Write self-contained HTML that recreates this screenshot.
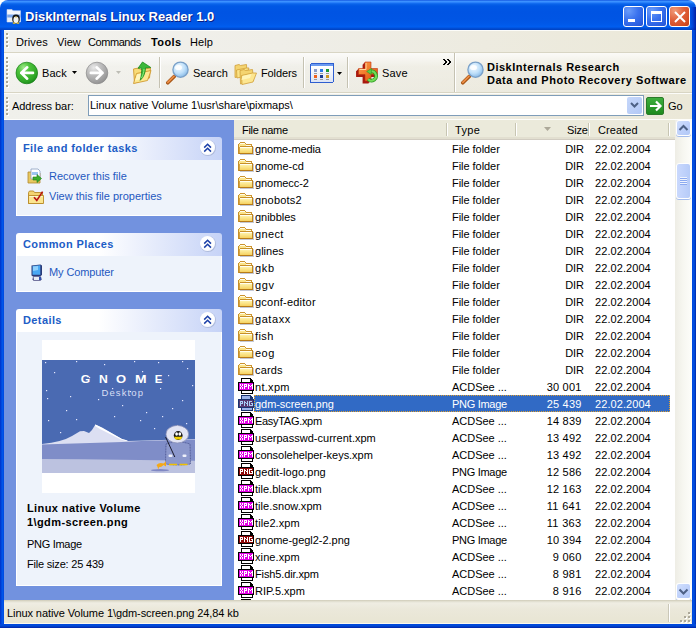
<!DOCTYPE html>
<html><head><meta charset="utf-8">
<style>
*{margin:0;padding:0;box-sizing:border-box}
html,body{width:696px;height:628px;overflow:hidden;background:#fff}
body{position:relative;font-family:"Liberation Sans",sans-serif;font-size:11px;color:#000}
.a{position:absolute}
.t{position:absolute;white-space:nowrap;line-height:13px}
#title{left:0;top:0;width:696px;height:30px;border-radius:8px 8px 0 0;
background:linear-gradient(to bottom,#0843d8 0px,#3c95ff 1px,#3a8eff 2px,#1a74f5 3px,#0a64ea 4px,#0058e5 6px,#0054e3 12px,#0055e4 19px,#0059e9 24px,#005ef0 27px,#0050da 28px,#0041c0 30px)}
#frameL{left:0;top:30px;width:4px;height:598px;background:linear-gradient(to right,#0030c8,#0052e6 2px,#0058ee 3px,#0040d8 4px)}
#frameR{left:692px;top:30px;width:4px;height:598px;background:linear-gradient(to right,#0040d8,#0052e6 1px,#0044d0 3px,#001ea0 4px)}
#frameB{left:0;top:624px;width:696px;height:4px;background:linear-gradient(to bottom,#0040d8,#0050e0 1px,#0038c0 3px,#0020a0 4px)}
.bar{background:#eef0eb}
.grip{position:absolute;width:3px;background:repeating-linear-gradient(to bottom,#a8a594 0 2px,transparent 2px 4px) 0 0/2px 100% no-repeat,repeating-linear-gradient(to bottom,transparent 0 1px,#fff 1px 3px,transparent 3px 4px) 1px 0/2px 100% no-repeat}
.sep{position:absolute;width:2px;background:linear-gradient(to right,#c5c2b2 1px,#fff 1px)}
.box{position:absolute;left:16px;width:206px}
.bh{position:absolute;left:0;top:0;width:206px;height:23px;border-radius:3px 3px 0 0;background:linear-gradient(to right,#fff 0%,#fff 40%,#c6d3f7 100%)}
.bh .t{color:#215dc6;font-weight:bold;left:7px;top:5px;letter-spacing:0.4px}
.bb{position:absolute;left:0;top:23px;width:206px;background:#eef3fb;border:1px solid #fff;border-top:0}
.chev{position:absolute;left:184px;top:3px;width:15px;height:15px;border-radius:50%;background:radial-gradient(circle at 45% 40%,#fff 55%,#f4f6fc 75%,#b8c2e0 100%);box-shadow:0.5px 0.5px 0 0.5px #b0bcdc}
.lnk{color:#1f58c0}
.row{position:absolute;left:234px;width:441px;height:17px}
.row .t{top:2px}
</style></head><body>
<div id="title" class="a"></div>
<div class="a" style="left:690px;top:7px;width:6px;height:23px;background:linear-gradient(to right,rgba(0,40,200,0),rgba(0,40,190,.5) 3px,rgba(0,20,150,.85) 6px)"></div>
<div id="frameL" class="a"></div>
<div id="frameR" class="a"></div>
<div id="frameB" class="a"></div>

<!-- title icon -->
<svg class="a" style="left:6px;top:8px" width="16" height="16" viewBox="0 0 16 16">
<path d="M1 1.5h5l1 1.2h7.5V14H1z" fill="#f4f6fc" stroke="#c8d4ec" stroke-width=".6"/>
<path d="M1.2 6.5h13.3V14H1.2z" fill="#7aa4e8"/>
<path d="M1.2 9.5h13.3V14H1.2z" fill="#e8eef8"/>
<ellipse cx="10" cy="11" rx="3.8" ry="4.4" fill="#141414"/>
<ellipse cx="10" cy="11.8" rx="2.6" ry="3.4" fill="#f2f2f2"/>
<path d="M9 8.8h2l-1 1.2z" fill="#f4c41a"/>
<path d="M6.8 14.6h2.6v1.2H6.8zM10.6 14.6h2.6v1.2h-2.6z" fill="#f4c41a"/>
</svg>
<div class="t" style="left:25px;top:9px;font-size:13px;font-weight:bold;color:#fff;text-shadow:1px 1px 0 #0a1e82;line-height:15px">DiskInternals Linux Reader 1.0</div>
<!-- caption buttons -->
<div class="a" style="left:623px;top:6px;width:21px;height:21px;border:1px solid #fff;border-radius:3px;background:radial-gradient(circle at 25% 20%,#6a9cfa,#3a72ee 45%,#2a5ee0 80%,#2250d0)"></div>
<div class="a" style="left:628px;top:19px;width:7px;height:3px;background:#fff"></div>
<div class="a" style="left:646px;top:6px;width:21px;height:21px;border:1px solid #fff;border-radius:3px;background:radial-gradient(circle at 25% 20%,#6a9cfa,#3a72ee 45%,#2a5ee0 80%,#2250d0)"></div>
<div class="a" style="left:651px;top:11px;width:11px;height:11px;border:1px solid #fff;border-top-width:3px"></div>
<div class="a" style="left:669px;top:6px;width:21px;height:21px;border:1px solid #fff;border-radius:3px;background:radial-gradient(circle at 25% 20%,#f09a78,#e0603a 45%,#d44c22 80%,#c03c14)"></div>
<svg class="a" style="left:669px;top:6px" width="21" height="21"><path d="M6 6L16 16M16 6L6 16" stroke="#fff" stroke-width="2"/></svg>

<div class="a bar" style="left:4px;top:30px;width:688px;height:22px;background:linear-gradient(to right,#f2f2ee 0%,#efeee8 40%,#ebe8d8 100%);border-top:1px solid #fcfcf9"></div>
<div class="a" style="left:4px;top:52px;width:688px;height:1px;background:#d8d5c4"></div>
<div class="grip" style="left:6px;top:33px;height:15px"></div>
<div class="t" style="left:16px;top:36px;letter-spacing:0.105px">Drives</div>
<div class="t" style="left:57px;top:36px;letter-spacing:0.036px">View</div>
<div class="t" style="left:88px;top:36px;letter-spacing:-0.431px">Commands</div>
<div class="t" style="left:151px;top:36px;font-weight:bold;letter-spacing:0.4px">Tools</div>
<div class="t" style="left:190px;top:36px;letter-spacing:0.044px">Help</div>

<div class="a" style="left:4px;top:53px;width:688px;height:39px;background:linear-gradient(to bottom,rgba(255,255,255,.8),rgba(255,255,255,.15) 35%,rgba(255,255,255,0) 100%),linear-gradient(to right,#f1f1ec 0%,#eeede6 40%,#ebe8d8 100%)"></div>
<div class="a" style="left:4px;top:92px;width:688px;height:1px;background:#d8d5c4"></div>
<div class="grip" style="left:6px;top:57px;height:31px"></div>
<div class="grip" style="left:459px;top:57px;height:31px;display:none"></div>
<div class="sep" style="left:454px;top:53px;height:39px"></div>
<!-- back -->
<svg class="a" style="left:15px;top:61px" width="24" height="24" viewBox="0 0 24 24">
<defs><radialGradient id="gb" cx="35%" cy="25%" r="80%"><stop offset="0" stop-color="#9ee88a"/><stop offset=".35" stop-color="#4cc23a"/><stop offset=".8" stop-color="#2ea626"/><stop offset="1" stop-color="#1a8a1a"/></radialGradient>
<radialGradient id="lens" cx="40%" cy="35%" r="65%"><stop offset="0" stop-color="#f4fbff"/><stop offset=".6" stop-color="#bfe0fa"/><stop offset="1" stop-color="#8cbce8"/></radialGradient>
<radialGradient id="gg" cx="35%" cy="25%" r="80%"><stop offset="0" stop-color="#e8e8e8"/><stop offset=".4" stop-color="#c0c0c0"/><stop offset="1" stop-color="#909090"/></radialGradient></defs>
<circle cx="11.8" cy="12" r="10.8" fill="url(#gb)" stroke="#1a8018" stroke-width=".7"/>
<path d="M18 11.9H6.2M12.2 6.3L6.2 11.9l6 5.8" stroke="#fff" stroke-width="2.6" fill="none" stroke-linecap="round" stroke-linejoin="round"/>
</svg>
<div class="t" style="left:42px;top:67px;letter-spacing:0.083px">Back</div>
<svg class="a" style="left:72px;top:71px" width="6" height="4"><path d="M0 0h5L2.5 3z" fill="#000"/></svg>
<svg class="a" style="left:85px;top:61px" width="24" height="24" viewBox="0 0 24 24">
<circle cx="12" cy="12" r="10.8" fill="url(#gg)" stroke="#8a8a8a" stroke-width=".7"/>
<path d="M5.8 11.9H17.6M11.6 6.3l6 5.6-6 5.8" stroke="#fff" stroke-width="2.6" fill="none" stroke-linecap="round" stroke-linejoin="round"/>
</svg>
<svg class="a" style="left:116px;top:71px" width="6" height="4"><path d="M0 0h5L2.5 3z" fill="#bdbdb5"/></svg>
<!-- up -->
<svg class="a" style="left:130px;top:61px" width="24" height="24" viewBox="0 0 24 24">
<path d="M3.5 8l5-1 2 1.5 10-1.5-1 10-15 5z" fill="#f8dc78" stroke="#d09a30" stroke-width=".9"/>
<path d="M6.5 12.5l14.5-3-3.5 10-14 3z" fill="#fde890" stroke="#d09a30" stroke-width=".9"/>
<path d="M7 13.5l6-1.3-2 6-6 1.3z" fill="#fff6c0"/>
<path d="M12.5 1L8 7.3l3.6-.2c.3 3-.2 8-1.4 12.2 3.6-3 5.2-8 5.3-12.4l5.3-.4z" fill="#3cb83a" stroke="#1c8a1c" stroke-width=".8" stroke-linejoin="round"/>
<path d="M14 8c0 3-1 6-2.5 9" stroke="#8ef07a" stroke-width="1" fill="none"/>
</svg>
<div class="sep" style="left:159px;top:57px;height:31px"></div>
<!-- search -->
<svg class="a" style="left:165px;top:61px" width="24" height="24" viewBox="0 0 24 24">
<path d="M2.8 21.8l6.4-6.4" stroke="#a85818" stroke-width="3.6" stroke-linecap="round"/>
<path d="M2.8 21.4l6.2-6.2" stroke="#f09048" stroke-width="1.6" stroke-linecap="round"/>
<circle cx="15.5" cy="8.7" r="7.6" fill="url(#lens)" stroke="#7aa0c8" stroke-width="1.3"/>
<ellipse cx="13.5" cy="6.5" rx="3.5" ry="2.6" fill="#fff" opacity=".85"/>
</svg>
<div class="t" style="left:193px;top:67px;letter-spacing:-0.010px">Search</div>
<!-- folders -->
<svg class="a" style="left:234px;top:61px" width="24" height="24" viewBox="0 0 24 24">
<path d="M1 4.5l4-1 1.5 1 6-1 .5 10-12 3z" fill="#f4d470" stroke="#d0a038" stroke-width=".8"/>
<path d="M2.5 9l10-2 2.5 0-3 8-9 2z" fill="#fbe488" stroke="#d0a038" stroke-width=".8"/>
<path d="M6 9.5l4-1 1.5 1 7-1 1 11-13 3.5z" fill="#f4d470" stroke="#d0a038" stroke-width=".8"/>
<path d="M7.5 14.5l11-2.5 4 0-3.5 9-11 2.5z" fill="#fde690" stroke="#d0a038" stroke-width=".8"/>
<path d="M8.5 15l9-2-1.5 4-8.5 2z" fill="#fff4b8"/>
</svg>
<div class="t" style="left:261px;top:67px;letter-spacing:-0.127px">Folders</div>
<div class="sep" style="left:303px;top:57px;height:31px"></div>
<!-- views -->
<svg class="a" style="left:310px;top:63px" width="24" height="21" viewBox="0 0 24 21" shape-rendering="crispEdges">
<defs><linearGradient id="vw" x1="0" y1="0" x2="0" y2="1"><stop offset="0" stop-color="#ffffff"/><stop offset="1" stop-color="#dce4f4"/></linearGradient></defs>
<rect x="0" y="0" width="24" height="20" rx="2" fill="#2e5ed0"/>
<rect x="1" y="1" width="22" height="2" fill="#6a9af0"/>
<rect x="1" y="3" width="22" height="16" fill="url(#vw)"/>
<rect x="4" y="6" width="3" height="3" fill="#8a9cc8"/><rect x="10" y="6" width="3" height="3" fill="#2a7ae8"/><rect x="16" y="6" width="3" height="3" fill="#1a9a30"/>
<rect x="4" y="10" width="3" height="1" fill="#9a9a9a"/><rect x="10" y="10" width="3" height="1" fill="#9a9a9a"/><rect x="16" y="10" width="3" height="1" fill="#9a9a9a"/>
<rect x="4" y="12" width="3" height="3" fill="#f0601a"/><rect x="10" y="12" width="3" height="3" fill="#1a3a90"/><rect x="16" y="12" width="3" height="3" fill="#d09a20"/>
<rect x="4" y="16" width="3" height="1" fill="#9a9a9a"/><rect x="10" y="16" width="3" height="1" fill="#9a9a9a"/><rect x="16" y="16" width="3" height="1" fill="#9a9a9a"/>
</svg>
<svg class="a" style="left:337px;top:72px" width="6" height="4"><path d="M0 0h5L2.5 3z" fill="#000"/></svg>
<div class="sep" style="left:347px;top:57px;height:31px"></div>
<!-- save -->
<svg class="a" style="left:354px;top:61px" width="25" height="24" viewBox="0 0 25 24">
<defs><linearGradient id="cr" x1="0" y1="0" x2="1" y2="1"><stop offset="0" stop-color="#ffa050"/><stop offset=".5" stop-color="#f07828"/><stop offset="1" stop-color="#d84810"/></linearGradient></defs>
<g transform="translate(1.5 0)"><path d="M9.5 1h6v6.5h6.5v6h-6.5v6.5h-6v-6.5H3v-6h6.5z" fill="#a81a0e" transform="translate(-0.6 0.6)"/><path d="M9.5 1h6v6.5h6.5v6h-6.5v6.5h-6v-6.5H3v-6h6.5z" fill="#a81a0e" transform="translate(-1.2 1.2)"/><path d="M9.5 1h6v6.5h6.5v6h-6.5v6.5h-6v-6.5H3v-6h6.5z" fill="#a81a0e" transform="translate(-1.8 1.8)"/><path d="M9.5 1h6v6.5h6.5v6h-6.5v6.5h-6v-6.5H3v-6h6.5z" fill="#a81a0e" transform="translate(-2.4 2.4)"/>
<path d="M9.5 1h6v6.5h6.5v6h-6.5v6.5h-6v-6.5H3v-6h6.5z" fill="url(#cr)" stroke="#c03010" stroke-width=".6"/>
<path d="M10.5 2v6.5H4" stroke="#ffd8a0" stroke-width="1" fill="none"/></g>
<path d="M14.2 18.2a4.6 4.6 0 1 0 1.8-7.6" stroke="#2a9a20" stroke-width="3.6" fill="none"/>
<path d="M14.2 18.2a4.6 4.6 0 1 0 1.8-7.6" stroke="#74dc58" stroke-width="2" fill="none"/>
<path d="M17.5 7.5l-4.8 3 4.5 3z" fill="#5ccc44" stroke="#2a9a20" stroke-width=".6"/>
</svg>
<div class="t" style="left:382px;top:67px;letter-spacing:0.180px">Save</div>
<svg class="a" style="left:443px;top:59px" width="9" height="6" shape-rendering="crispEdges"><path d="M0 0h2v1h1v1h1v2h-1v1h-1v1H0V5h1V4h1V2H1V1H0zM4 0h2v1h1v1h1v2h-1v1h-1v1H4V5h1V4h1V2H5V1H4z" fill="#000"/></svg>
<!-- diskinternals -->
<svg class="a" style="left:460px;top:61px" width="24" height="24" viewBox="0 0 24 24">
<path d="M2.8 21.8l6.4-6.4" stroke="#a85818" stroke-width="3.6" stroke-linecap="round"/>
<path d="M2.8 21.4l6.2-6.2" stroke="#f09048" stroke-width="1.6" stroke-linecap="round"/>
<circle cx="15.5" cy="8.7" r="7.6" fill="url(#lens)" stroke="#7aa0c8" stroke-width="1.3"/>
<ellipse cx="13.5" cy="6.5" rx="3.5" ry="2.6" fill="#fff" opacity=".85"/>
</svg>
<div class="t" style="left:487px;top:61px;font-weight:bold;letter-spacing:0.5px">DiskInternals Research</div>
<div class="t" style="left:487px;top:74px;font-weight:bold;letter-spacing:0.53px">Data and Photo Recovery Software</div>

<div class="a" style="left:4px;top:93px;width:688px;height:27px;background:linear-gradient(to right,#f0f0eb 0%,#eeede6 40%,#ebe8d8 100%);border-top:1px solid #fcfcf9;border-bottom:1px solid #fdfdfa"></div>
<div class="grip" style="left:6px;top:97px;height:19px"></div>
<div class="t" style="left:12px;top:100px;letter-spacing:-0.048px">Address bar:</div>
<div class="a" style="left:88px;top:95px;width:556px;height:21px;background:#fff;border:1px solid #7f9db9"></div>
<div class="t" style="left:90px;top:99px;letter-spacing:-0.020px">Linux native Volume 1\usr\share\pixmaps\</div>
<div class="a" style="left:627px;top:97px;width:15px;height:17px;border-radius:2px;background:linear-gradient(135deg,#c6d7fa,#b2c8f6)"></div>
<svg class="a" style="left:630px;top:102px" width="9" height="7"><path d="M1 1l3.5 3.5L8 1" stroke="#4d6185" stroke-width="2" fill="none"/></svg>
<div class="a" style="left:646px;top:97px;width:18px;height:18px;border-radius:2px;background:linear-gradient(to bottom,#3dae3d,#1e8a1e);border:1px solid #2a7a2a"></div>
<svg class="a" style="left:646px;top:97px" width="19" height="18"><path d="M4 9h10M10 4.5l4.5 4.5L10 13.5" stroke="#fff" stroke-width="2.2" fill="none"/></svg>
<div class="t" style="left:668px;top:100px;letter-spacing:0.056px">Go</div>

<div class="a" style="left:4px;top:120px;width:230px;height:480px;background:#7292df"></div>
<div class="box" style="top:137px;height:79px">
 <div class="bh"><div class="t">File and folder tasks</div><div class="chev"></div>
 <svg class="a" style="left:184px;top:3px" width="15" height="15"><path d="M4.2 7.6L7.6 4.2L11 7.6M4.2 11.6L7.6 8.2L11 11.6" stroke="#1c40a8" stroke-width="1.5" fill="none"/></svg></div>
 <div class="bb" style="height:56px"></div>
 <svg class="a" style="left:11px;top:31px" width="16" height="16" viewBox="0 0 16 16">
  <path d="M1 4h5l1 1h6v10H1z" fill="#e8c860" stroke="#b08830" stroke-width=".8"/>
  <path d="M4 1h7l2 2v8H4z" fill="#fff" stroke="#8aa0c0" stroke-width=".8"/>
  <path d="M5 4h6v3H5z" fill="#9cc4f0"/>
  <path d="M6 9h4V6.5l4.5 4L10 14.5V12H6z" fill="#3cae2c" stroke="#1e7a18" stroke-width=".6"/>
 </svg>
 <div class="t lnk" style="left:33px;top:33px;letter-spacing:-0.027px">Recover this file</div>
 <svg class="a" style="left:12px;top:53px" width="16" height="14" viewBox="0 0 16 14">
  <path d="M.5 2.5l1-1.5h4l1 1.5h8v11H.5z" fill="#f4d470" stroke="#b88a28" stroke-width=".9"/>
  <path d="M.5 5.5h15v8H.5z" fill="#fbe590" stroke="#b88a28" stroke-width=".9"/>
  <path d="M1.5 6.5h13" stroke="#fff8d0" stroke-width="1"/>
  <path d="M6 7.2L8.8 10.4L14.6 1.6" stroke="#b81414" stroke-width="1.6" fill="none"/>
 </svg>
 <div class="t lnk" style="left:33px;top:53px;letter-spacing:-0.004px">View this file properties</div>
</div>
<div class="box" style="top:233px;height:59px">
 <div class="bh"><div class="t">Common Places</div><div class="chev"></div>
 <svg class="a" style="left:184px;top:3px" width="15" height="15"><path d="M4.2 7.6L7.6 4.2L11 7.6M4.2 11.6L7.6 8.2L11 11.6" stroke="#1c40a8" stroke-width="1.5" fill="none"/></svg></div>
 <div class="bb" style="height:36px"></div>
 <svg class="a" style="left:15px;top:31px" width="12" height="17" viewBox="0 0 12 17">
  <path d="M.5 1.5l9-1 1.5 1v9.5l-2 1.5H2l-1.5-1z" fill="#2a3a78"/>
  <path d="M1.5 2l7.8-.8v9.6H1.5z" fill="#4aa8f4"/>
  <path d="M2 2.5l5-.5v4l-5 1z" fill="#8fd0fc"/>
  <path d="M2 12.5h8l.5 3-1 1.3H2.5l-1-1.3z" fill="#4a4a80"/>
  <path d="M2.5 13h5.5v3H3z" fill="#e8ecf4"/>
  <path d="M8 13h2l.3 3H8z" fill="#3050b0"/>
 </svg>
 <div class="t lnk" style="left:33px;top:33px;letter-spacing:-0.112px">My Computer</div>
</div>
<div class="box" style="top:309px;height:277px">
 <div class="bh"><div class="t">Details</div><div class="chev"></div>
 <svg class="a" style="left:184px;top:3px" width="15" height="15"><path d="M4.2 7.6L7.6 4.2L11 7.6M4.2 11.6L7.6 8.2L11 11.6" stroke="#1c40a8" stroke-width="1.5" fill="none"/></svg></div>
 <div class="bb" style="height:254px"></div>
 <div class="a" style="left:26px;top:31px;width:153px;height:153px;background:#fff"></div>
 <svg class="a" style="left:26px;top:51px" width="153" height="113" viewBox="0 0 153 113">
  <rect width="153" height="113" fill="#4a6ab2"/>
  <rect x="3" y="2" width="1.2" height="1.2" fill="#e4e8ff"/><rect x="34" y="1" width="1.2" height="1.2" fill="#e4e8ff"/><rect x="62" y="4" width="1.2" height="1.2" fill="#e4e8ff"/><rect x="92" y="1" width="1.2" height="1.2" fill="#e4e8ff"/><rect x="116" y="2" width="1.2" height="1.2" fill="#e4e8ff"/><rect x="140" y="1" width="1.2" height="1.2" fill="#e4e8ff"/><rect x="12" y="12" width="1.2" height="1.2" fill="#e4e8ff"/><rect x="47" y="17" width="1.2" height="1.2" fill="#e4e8ff"/><rect x="100" y="11" width="1.2" height="1.2" fill="#e4e8ff"/><rect x="126" y="15" width="1.2" height="1.2" fill="#e4e8ff"/><rect x="145" y="8" width="1.2" height="1.2" fill="#e4e8ff"/><rect x="5" y="38" width="1.2" height="1.2" fill="#e4e8ff"/><rect x="28" y="36" width="1.2" height="1.2" fill="#e4e8ff"/><rect x="70" y="28" width="1.2" height="1.2" fill="#e4e8ff"/><rect x="88" y="31" width="1.2" height="1.2" fill="#e4e8ff"/><rect x="118" y="28" width="1.2" height="1.2" fill="#e4e8ff"/><rect x="140" y="40" width="1.2" height="1.2" fill="#e4e8ff"/><rect x="24" y="50" width="1.2" height="1.2" fill="#e4e8ff"/><rect x="56" y="39" width="1.2" height="1.2" fill="#e4e8ff"/><rect x="80" y="45" width="1.2" height="1.2" fill="#e4e8ff"/><rect x="104" y="52" width="1.2" height="1.2" fill="#e4e8ff"/><rect x="130" y="48" width="1.2" height="1.2" fill="#e4e8ff"/><rect x="6" y="60" width="1.2" height="1.2" fill="#e4e8ff"/><rect x="34" y="59" width="1.2" height="1.2" fill="#e4e8ff"/><rect x="72" y="56" width="1.2" height="1.2" fill="#e4e8ff"/><rect x="98" y="60" width="1.2" height="1.2" fill="#e4e8ff"/><rect x="120" y="56" width="1.2" height="1.2" fill="#e4e8ff"/><rect x="144" y="63" width="1.2" height="1.2" fill="#e4e8ff"/><rect x="18" y="72" width="1.2" height="1.2" fill="#e4e8ff"/><rect x="60" y="74" width="1.2" height="1.2" fill="#e4e8ff"/><rect x="112" y="68" width="1.2" height="1.2" fill="#e4e8ff"/><rect x="135" y="65" width="1.2" height="1.2" fill="#e4e8ff"/><rect x="4" y="30" width="1.2" height="1.2" fill="#e4e8ff"/><rect x="150" y="25" width="1.2" height="1.2" fill="#e4e8ff"/>
  <path d="M0 84 Q20 82 30 76 L38 71.3 L42 71 L47 73 L50 70 L53.4 64.4 L60 68 L80 79 L86 81 L153 79 V113 H0z" fill="#dcdff2"/>
  <path d="M53.4 64.4 L60 67.6 L80 79 L86 80.5 L84 81 L79 79.5 L58 69 L53 66z" fill="#ffffff"/>
  <path d="M0 84.5 Q40 83 80 82 Q120 80 153 79.5 V113 H0z" fill="#7f8dc8"/>
  <path d="M0 99 Q80 99.5 153 100.8 V113 H0z" fill="#bcc2e0"/>
  <g font-family="Liberation Sans" font-weight="bold" font-size="11" fill="#fff">
   <text x="38.7" y="23.2" textLength="9.4" lengthAdjust="spacingAndGlyphs">G</text><text x="57" y="23.2" textLength="8.8" lengthAdjust="spacingAndGlyphs">N</text><text x="74" y="23.2" textLength="10.1" lengthAdjust="spacingAndGlyphs">O</text><text x="93" y="23.2" textLength="11.6" lengthAdjust="spacingAndGlyphs">M</text><text x="112.8" y="23.2" textLength="7.6" lengthAdjust="spacingAndGlyphs">E</text>
  </g>
  <text x="59.5" y="35.5" font-family="Liberation Sans" font-size="9.5" fill="#e8ecff" fill-opacity=".9" letter-spacing="1.1">Desktop</text>
  <ellipse cx="118" cy="110.2" rx="9" ry="1.1" fill="#8088c4"/>
  <path d="M124 84 Q136 80 148 84 L148.5 104 Q136 106 123.5 104z" fill="#8c98cc" stroke="#3a4480" stroke-width=".7" stroke-dasharray="1 .6"/>
  <ellipse cx="135.3" cy="74.2" rx="11.3" ry="8.8" fill="#e2e4f4" stroke="#8a90b8" stroke-width=".8"/>
  <circle cx="136.2" cy="75.5" r="4.4" fill="#151515"/>
  <ellipse cx="134.6" cy="74" rx="1.4" ry="1.8" fill="#fff"/><ellipse cx="137.8" cy="74" rx="1.4" ry="1.8" fill="#fff"/>
  <path d="M132 76.8 h8.4 l-1.5 2.8 h-5.4z" fill="#f2d000"/>
  <path d="M123.6 77 L132.8 97" stroke="#1a1a2a" stroke-width="1"/>
  <rect x="126.5" y="94.5" width="4" height="2.6" rx="1" fill="#eef0fa"/><rect x="140.5" y="94.5" width="4" height="2.6" rx="1" fill="#eef0fa"/>
  <path d="M127 104.6 h8 M137.5 104.6 h8" stroke="#f0c000" stroke-width="1.5"/>
  <path d="M114.5 105 q3-3.2 7-1.5 l2.5-2 v5 l-2.5-1.6 q-2 2.2-4.5 2.4 l-.8 2.4 -.6-2.6z" fill="#f4a818"/>
 </svg>
 <div class="t" style="left:11px;top:193px;font-weight:bold;letter-spacing:0.4px">Linux native Volume</div>
 <div class="t" style="left:11px;top:207px;font-weight:bold;letter-spacing:0.4px">1\gdm-screen.png</div>
 <div class="t" style="left:11px;top:229px;letter-spacing:-0.297px">PNG Image</div>
 <div class="t" style="left:11px;top:249px;letter-spacing:-0.195px">File size: 25 439</div>
</div>

<div class="a" style="left:234px;top:120px;width:441px;height:480px;background:#fff"></div>
<div class="a" style="left:234px;top:120px;width:441px;height:20px;background:#ebeadb;border-bottom:1px solid #d1ccc1"></div>
<div class="a" style="left:234px;top:137px;width:441px;height:2px;background:#e2dfd0"></div>
<div class="t" style="left:242px;top:124px;letter-spacing:-0.277px">File name</div>
<div class="a" style="left:446px;top:123px;width:1px;height:13px;background:#c7c5b2"></div>
<div class="a" style="left:447px;top:123px;width:1px;height:13px;background:#fff"></div>
<div class="t" style="left:455px;top:124px;letter-spacing:0.3px">Type</div>
<div class="a" style="left:515px;top:123px;width:1px;height:13px;background:#c7c5b2"></div>
<div class="a" style="left:516px;top:123px;width:1px;height:13px;background:#fff"></div>
<svg class="a" style="left:544px;top:127px" width="8" height="5"><path d="M0 0h7L3.5 4z" fill="#aca899"/></svg>
<div class="t" style="left:567px;top:124px;letter-spacing:-0.152px">Size</div>
<div class="a" style="left:588px;top:123px;width:1px;height:13px;background:#c7c5b2"></div>
<div class="a" style="left:589px;top:123px;width:1px;height:13px;background:#fff"></div>
<div class="t" style="left:598px;top:124px;letter-spacing:0.094px">Created</div>
<div class="a" style="left:668px;top:123px;width:1px;height:13px;background:#c7c5b2"></div>
<div class="a" style="left:669px;top:123px;width:1px;height:13px;background:#fff"></div>

<!-- rows -->
<svg width="0" height="0" style="position:absolute"><defs>
<linearGradient id="fg" x1="0" y1="0" x2="0" y2="1"><stop offset="0" stop-color="#fff8b8"/><stop offset="1" stop-color="#f6d260"/></linearGradient>
<symbol id="ifold" viewBox="0 0 16 16" shape-rendering="crispEdges">
<path d="M1 3h6l1 1h5v2h1v8H1z" fill="#fbe48a"/>
<rect x="2" y="2" width="5" height="1" fill="#cc9430"/><rect x="1" y="3" width="1" height="1" fill="#cc9430"/><rect x="7" y="3" width="1" height="1" fill="#cc9430"/>
<rect x="8" y="4" width="5" height="1" fill="#cc9430"/><rect x="13" y="4" width="1" height="2" fill="#cc9430"/>
<rect x="0" y="4" width="1" height="10" fill="#c89028"/>
<rect x="2" y="3" width="5" height="1" fill="#fffce8"/><rect x="8" y="5" width="5" height="1" fill="#fffce8"/>
<rect x="2" y="6" width="13" height="1" fill="#c89028"/>
<rect x="2" y="7" width="12" height="6" fill="url(#fg)"/>
<rect x="2" y="7" width="12" height="1" fill="#fffef0"/>
<rect x="1" y="7" width="1" height="7" fill="#d8a440"/>
<rect x="14" y="6" width="1" height="8" fill="#c08420"/>
<rect x="1" y="13" width="14" height="1" fill="#b87c18"/>
<rect x="15" y="7" width="1" height="7" fill="#c4c8d4"/><rect x="2" y="14" width="14" height="1" fill="#c4c8d4"/>
</symbol>
<symbol id="ixpm" viewBox="0 0 16 16" shape-rendering="crispEdges">
<path d="M3 0h9l3 3v13H3z" fill="#000"/><path d="M4 1h8v3h2v11H4z" fill="#fff"/>
<rect x="0" y="4" width="16" height="9" fill="#000"/><rect x="1" y="5" width="14" height="7" fill="#e200e6"/>
<rect x="2" y="6" width="1" height="1" fill="#fff"/><rect x="4" y="6" width="1" height="1" fill="#fff"/><rect x="2" y="7" width="1" height="1" fill="#fff"/><rect x="4" y="7" width="1" height="1" fill="#fff"/><rect x="3" y="8" width="1" height="1" fill="#fff"/><rect x="2" y="9" width="1" height="1" fill="#fff"/><rect x="4" y="9" width="1" height="1" fill="#fff"/><rect x="2" y="10" width="1" height="1" fill="#fff"/><rect x="4" y="10" width="1" height="1" fill="#fff"/><rect x="6" y="6" width="1" height="1" fill="#fff"/><rect x="7" y="6" width="1" height="1" fill="#fff"/><rect x="8" y="6" width="1" height="1" fill="#fff"/><rect x="6" y="7" width="1" height="1" fill="#fff"/><rect x="8" y="7" width="1" height="1" fill="#fff"/><rect x="6" y="8" width="1" height="1" fill="#fff"/><rect x="7" y="8" width="1" height="1" fill="#fff"/><rect x="8" y="8" width="1" height="1" fill="#fff"/><rect x="6" y="9" width="1" height="1" fill="#fff"/><rect x="6" y="10" width="1" height="1" fill="#fff"/><rect x="10" y="6" width="1" height="1" fill="#fff"/><rect x="14" y="6" width="1" height="1" fill="#fff"/><rect x="10" y="7" width="1" height="1" fill="#fff"/><rect x="11" y="7" width="1" height="1" fill="#fff"/><rect x="13" y="7" width="1" height="1" fill="#fff"/><rect x="14" y="7" width="1" height="1" fill="#fff"/><rect x="10" y="8" width="1" height="1" fill="#fff"/><rect x="12" y="8" width="1" height="1" fill="#fff"/><rect x="14" y="8" width="1" height="1" fill="#fff"/><rect x="10" y="9" width="1" height="1" fill="#fff"/><rect x="14" y="9" width="1" height="1" fill="#fff"/><rect x="10" y="10" width="1" height="1" fill="#fff"/><rect x="14" y="10" width="1" height="1" fill="#fff"/>
</symbol>
<symbol id="ipng" viewBox="0 0 16 16" shape-rendering="crispEdges">
<path d="M3 0h9l3 3v13H3z" fill="#000"/><path d="M4 1h8v3h2v11H4z" fill="#fff"/>
<rect x="0" y="4" width="16" height="9" fill="#000"/><rect x="1" y="5" width="14" height="7" fill="#8e0606"/>
<rect x="2" y="6" width="1" height="1" fill="#fff"/><rect x="3" y="6" width="1" height="1" fill="#fff"/><rect x="4" y="6" width="1" height="1" fill="#fff"/><rect x="2" y="7" width="1" height="1" fill="#fff"/><rect x="4" y="7" width="1" height="1" fill="#fff"/><rect x="2" y="8" width="1" height="1" fill="#fff"/><rect x="3" y="8" width="1" height="1" fill="#fff"/><rect x="4" y="8" width="1" height="1" fill="#fff"/><rect x="2" y="9" width="1" height="1" fill="#fff"/><rect x="2" y="10" width="1" height="1" fill="#fff"/><rect x="6" y="6" width="1" height="1" fill="#fff"/><rect x="9" y="6" width="1" height="1" fill="#fff"/><rect x="6" y="7" width="1" height="1" fill="#fff"/><rect x="7" y="7" width="1" height="1" fill="#fff"/><rect x="9" y="7" width="1" height="1" fill="#fff"/><rect x="6" y="8" width="1" height="1" fill="#fff"/><rect x="8" y="8" width="1" height="1" fill="#fff"/><rect x="9" y="8" width="1" height="1" fill="#fff"/><rect x="6" y="9" width="1" height="1" fill="#fff"/><rect x="9" y="9" width="1" height="1" fill="#fff"/><rect x="6" y="10" width="1" height="1" fill="#fff"/><rect x="9" y="10" width="1" height="1" fill="#fff"/><rect x="11" y="6" width="1" height="1" fill="#fff"/><rect x="12" y="6" width="1" height="1" fill="#fff"/><rect x="13" y="6" width="1" height="1" fill="#fff"/><rect x="11" y="7" width="1" height="1" fill="#fff"/><rect x="11" y="8" width="1" height="1" fill="#fff"/><rect x="13" y="8" width="1" height="1" fill="#fff"/><rect x="14" y="8" width="1" height="1" fill="#fff"/><rect x="11" y="9" width="1" height="1" fill="#fff"/><rect x="14" y="9" width="1" height="1" fill="#fff"/><rect x="11" y="10" width="1" height="1" fill="#fff"/><rect x="12" y="10" width="1" height="1" fill="#fff"/><rect x="13" y="10" width="1" height="1" fill="#fff"/><rect x="14" y="10" width="1" height="1" fill="#fff"/>
</symbol>
<symbol id="ipngs" viewBox="0 0 16 16" shape-rendering="crispEdges">
<path d="M3 0h9l3 3v13H3z" fill="#1a3470"/><path d="M4 1h8v3h2v11H4z" fill="#9cb4ea"/>
<rect x="0" y="4" width="16" height="9" fill="#1a3470"/><rect x="1" y="5" width="14" height="7" fill="#583a70"/>
<rect x="2" y="6" width="1" height="1" fill="#a8d0f8"/><rect x="3" y="6" width="1" height="1" fill="#a8d0f8"/><rect x="4" y="6" width="1" height="1" fill="#a8d0f8"/><rect x="2" y="7" width="1" height="1" fill="#a8d0f8"/><rect x="4" y="7" width="1" height="1" fill="#a8d0f8"/><rect x="2" y="8" width="1" height="1" fill="#a8d0f8"/><rect x="3" y="8" width="1" height="1" fill="#a8d0f8"/><rect x="4" y="8" width="1" height="1" fill="#a8d0f8"/><rect x="2" y="9" width="1" height="1" fill="#a8d0f8"/><rect x="2" y="10" width="1" height="1" fill="#a8d0f8"/><rect x="6" y="6" width="1" height="1" fill="#a8d0f8"/><rect x="9" y="6" width="1" height="1" fill="#a8d0f8"/><rect x="6" y="7" width="1" height="1" fill="#a8d0f8"/><rect x="7" y="7" width="1" height="1" fill="#a8d0f8"/><rect x="9" y="7" width="1" height="1" fill="#a8d0f8"/><rect x="6" y="8" width="1" height="1" fill="#a8d0f8"/><rect x="8" y="8" width="1" height="1" fill="#a8d0f8"/><rect x="9" y="8" width="1" height="1" fill="#a8d0f8"/><rect x="6" y="9" width="1" height="1" fill="#a8d0f8"/><rect x="9" y="9" width="1" height="1" fill="#a8d0f8"/><rect x="6" y="10" width="1" height="1" fill="#a8d0f8"/><rect x="9" y="10" width="1" height="1" fill="#a8d0f8"/><rect x="11" y="6" width="1" height="1" fill="#a8d0f8"/><rect x="12" y="6" width="1" height="1" fill="#a8d0f8"/><rect x="13" y="6" width="1" height="1" fill="#a8d0f8"/><rect x="11" y="7" width="1" height="1" fill="#a8d0f8"/><rect x="11" y="8" width="1" height="1" fill="#a8d0f8"/><rect x="13" y="8" width="1" height="1" fill="#a8d0f8"/><rect x="14" y="8" width="1" height="1" fill="#a8d0f8"/><rect x="11" y="9" width="1" height="1" fill="#a8d0f8"/><rect x="14" y="9" width="1" height="1" fill="#a8d0f8"/><rect x="11" y="10" width="1" height="1" fill="#a8d0f8"/><rect x="12" y="10" width="1" height="1" fill="#a8d0f8"/><rect x="13" y="10" width="1" height="1" fill="#a8d0f8"/><rect x="14" y="10" width="1" height="1" fill="#a8d0f8"/>
</symbol>
</defs></svg>
<svg class="a" style="left:238px;top:140px" width="16" height="16"><use href="#ifold"/></svg>
<div class="t" style="left:255px;top:143px;color:#000;letter-spacing:-0.133px">gnome-media</div>
<div class="t" style="left:452px;top:143px;color:#000;letter-spacing:-0.045px">File folder</div>
<div class="t" style="right:112px;top:143px;color:#000;letter-spacing:-0.051px">DIR</div>
<div class="t" style="left:595px;top:143px;color:#000;letter-spacing:0.074px">22.02.2004</div>
<svg class="a" style="left:238px;top:157px" width="16" height="16"><use href="#ifold"/></svg>
<div class="t" style="left:255px;top:160px;color:#000;letter-spacing:-0.015px">gnome-cd</div>
<div class="t" style="left:452px;top:160px;color:#000;letter-spacing:-0.045px">File folder</div>
<div class="t" style="right:112px;top:160px;color:#000;letter-spacing:-0.051px">DIR</div>
<div class="t" style="left:595px;top:160px;color:#000;letter-spacing:0.074px">22.02.2004</div>
<svg class="a" style="left:238px;top:174px" width="16" height="16"><use href="#ifold"/></svg>
<div class="t" style="left:255px;top:177px;color:#000;letter-spacing:-0.069px">gnomecc-2</div>
<div class="t" style="left:452px;top:177px;color:#000;letter-spacing:-0.045px">File folder</div>
<div class="t" style="right:112px;top:177px;color:#000;letter-spacing:-0.051px">DIR</div>
<div class="t" style="left:595px;top:177px;color:#000;letter-spacing:0.074px">22.02.2004</div>
<svg class="a" style="left:238px;top:191px" width="16" height="16"><use href="#ifold"/></svg>
<div class="t" style="left:255px;top:194px;color:#000;letter-spacing:0.192px">gnobots2</div>
<div class="t" style="left:452px;top:194px;color:#000;letter-spacing:-0.045px">File folder</div>
<div class="t" style="right:112px;top:194px;color:#000;letter-spacing:-0.051px">DIR</div>
<div class="t" style="left:595px;top:194px;color:#000;letter-spacing:0.074px">22.02.2004</div>
<svg class="a" style="left:238px;top:208px" width="16" height="16"><use href="#ifold"/></svg>
<div class="t" style="left:255px;top:211px;color:#000;letter-spacing:-0.023px">gnibbles</div>
<div class="t" style="left:452px;top:211px;color:#000;letter-spacing:-0.045px">File folder</div>
<div class="t" style="right:112px;top:211px;color:#000;letter-spacing:-0.051px">DIR</div>
<div class="t" style="left:595px;top:211px;color:#000;letter-spacing:0.074px">22.02.2004</div>
<svg class="a" style="left:238px;top:225px" width="16" height="16"><use href="#ifold"/></svg>
<div class="t" style="left:255px;top:228px;color:#000;letter-spacing:0.376px">gnect</div>
<div class="t" style="left:452px;top:228px;color:#000;letter-spacing:-0.045px">File folder</div>
<div class="t" style="right:112px;top:228px;color:#000;letter-spacing:-0.051px">DIR</div>
<div class="t" style="left:595px;top:228px;color:#000;letter-spacing:0.074px">22.02.2004</div>
<svg class="a" style="left:238px;top:242px" width="16" height="16"><use href="#ifold"/></svg>
<div class="t" style="left:255px;top:245px;color:#000;letter-spacing:0.008px">glines</div>
<div class="t" style="left:452px;top:245px;color:#000;letter-spacing:-0.045px">File folder</div>
<div class="t" style="right:112px;top:245px;color:#000;letter-spacing:-0.051px">DIR</div>
<div class="t" style="left:595px;top:245px;color:#000;letter-spacing:0.074px">22.02.2004</div>
<svg class="a" style="left:238px;top:259px" width="16" height="16"><use href="#ifold"/></svg>
<div class="t" style="left:255px;top:262px;color:#000;letter-spacing:0.683px">gkb</div>
<div class="t" style="left:452px;top:262px;color:#000;letter-spacing:-0.045px">File folder</div>
<div class="t" style="right:112px;top:262px;color:#000;letter-spacing:-0.051px">DIR</div>
<div class="t" style="left:595px;top:262px;color:#000;letter-spacing:0.074px">22.02.2004</div>
<svg class="a" style="left:238px;top:276px" width="16" height="16"><use href="#ifold"/></svg>
<div class="t" style="left:255px;top:279px;color:#000;letter-spacing:0.683px">ggv</div>
<div class="t" style="left:452px;top:279px;color:#000;letter-spacing:-0.045px">File folder</div>
<div class="t" style="right:112px;top:279px;color:#000;letter-spacing:-0.051px">DIR</div>
<div class="t" style="left:595px;top:279px;color:#000;letter-spacing:0.074px">22.02.2004</div>
<svg class="a" style="left:238px;top:293px" width="16" height="16"><use href="#ifold"/></svg>
<div class="t" style="left:255px;top:296px;color:#000;letter-spacing:0.226px">gconf-editor</div>
<div class="t" style="left:452px;top:296px;color:#000;letter-spacing:-0.045px">File folder</div>
<div class="t" style="right:112px;top:296px;color:#000;letter-spacing:-0.051px">DIR</div>
<div class="t" style="left:595px;top:296px;color:#000;letter-spacing:0.074px">22.02.2004</div>
<svg class="a" style="left:238px;top:310px" width="16" height="16"><use href="#ifold"/></svg>
<div class="t" style="left:255px;top:313px;color:#000;letter-spacing:0.563px">gataxx</div>
<div class="t" style="left:452px;top:313px;color:#000;letter-spacing:-0.045px">File folder</div>
<div class="t" style="right:112px;top:313px;color:#000;letter-spacing:-0.051px">DIR</div>
<div class="t" style="left:595px;top:313px;color:#000;letter-spacing:0.074px">22.02.2004</div>
<svg class="a" style="left:238px;top:327px" width="16" height="16"><use href="#ifold"/></svg>
<div class="t" style="left:255px;top:330px;color:#000;letter-spacing:0.419px">fish</div>
<div class="t" style="left:452px;top:330px;color:#000;letter-spacing:-0.045px">File folder</div>
<div class="t" style="right:112px;top:330px;color:#000;letter-spacing:-0.051px">DIR</div>
<div class="t" style="left:595px;top:330px;color:#000;letter-spacing:0.074px">22.02.2004</div>
<svg class="a" style="left:238px;top:344px" width="16" height="16"><use href="#ifold"/></svg>
<div class="t" style="left:255px;top:347px;color:#000;letter-spacing:0.480px">eog</div>
<div class="t" style="left:452px;top:347px;color:#000;letter-spacing:-0.045px">File folder</div>
<div class="t" style="right:112px;top:347px;color:#000;letter-spacing:-0.051px">DIR</div>
<div class="t" style="left:595px;top:347px;color:#000;letter-spacing:0.074px">22.02.2004</div>
<svg class="a" style="left:238px;top:361px" width="16" height="16"><use href="#ifold"/></svg>
<div class="t" style="left:255px;top:364px;color:#000;letter-spacing:0.179px">cards</div>
<div class="t" style="left:452px;top:364px;color:#000;letter-spacing:-0.045px">File folder</div>
<div class="t" style="right:112px;top:364px;color:#000;letter-spacing:-0.051px">DIR</div>
<div class="t" style="left:595px;top:364px;color:#000;letter-spacing:0.074px">22.02.2004</div>
<svg class="a" style="left:238px;top:378px" width="16" height="16"><use href="#ixpm"/></svg>
<div class="t" style="left:255px;top:381px;color:#000;letter-spacing:0.297px">nt.xpm</div>
<div class="t" style="left:452px;top:381px;color:#000;letter-spacing:-0.023px">ACDSee ...</div>
<div class="t" style="right:114.5px;top:381px;color:#000;letter-spacing:0.191px">30 001</div>
<div class="t" style="left:595px;top:381px;color:#000;letter-spacing:0.074px">22.02.2004</div>
<div class="a" style="left:254px;top:395px;width:416px;height:17px;background:#316ac5;outline:1px dotted #e0a030;outline-offset:-1px"></div>
<svg class="a" style="left:238px;top:395px" width="16" height="16"><use href="#ipngs"/></svg>
<div class="t" style="left:255px;top:398px;color:#fff;letter-spacing:-0.050px">gdm-screen.png</div>
<div class="t" style="left:452px;top:398px;color:#fff;letter-spacing:-0.297px">PNG Image</div>
<div class="t" style="right:114.5px;top:398px;color:#fff;letter-spacing:0.191px">25 439</div>
<div class="t" style="left:595px;top:398px;color:#fff;letter-spacing:0.074px">22.02.2004</div>
<svg class="a" style="left:238px;top:412px" width="16" height="16"><use href="#ixpm"/></svg>
<div class="t" style="left:255px;top:415px;color:#000;letter-spacing:-0.299px">EasyTAG.xpm</div>
<div class="t" style="left:452px;top:415px;color:#000;letter-spacing:-0.023px">ACDSee ...</div>
<div class="t" style="right:114.5px;top:415px;color:#000;letter-spacing:0.191px">14 839</div>
<div class="t" style="left:595px;top:415px;color:#000;letter-spacing:0.074px">22.02.2004</div>
<svg class="a" style="left:238px;top:429px" width="16" height="16"><use href="#ixpm"/></svg>
<div class="t" style="left:255px;top:432px;color:#000;letter-spacing:0.016px">userpasswd-current.xpm</div>
<div class="t" style="left:452px;top:432px;color:#000;letter-spacing:-0.023px">ACDSee ...</div>
<div class="t" style="right:114.5px;top:432px;color:#000;letter-spacing:0.191px">13 492</div>
<div class="t" style="left:595px;top:432px;color:#000;letter-spacing:0.074px">22.02.2004</div>
<svg class="a" style="left:238px;top:446px" width="16" height="16"><use href="#ixpm"/></svg>
<div class="t" style="left:255px;top:449px;color:#000;letter-spacing:-0.038px">consolehelper-keys.xpm</div>
<div class="t" style="left:452px;top:449px;color:#000;letter-spacing:-0.023px">ACDSee ...</div>
<div class="t" style="right:114.5px;top:449px;color:#000;letter-spacing:0.191px">13 492</div>
<div class="t" style="left:595px;top:449px;color:#000;letter-spacing:0.074px">22.02.2004</div>
<svg class="a" style="left:238px;top:463px" width="16" height="16"><use href="#ipng"/></svg>
<div class="t" style="left:255px;top:466px;color:#000;letter-spacing:0.076px">gedit-logo.png</div>
<div class="t" style="left:452px;top:466px;color:#000;letter-spacing:-0.297px">PNG Image</div>
<div class="t" style="right:114.5px;top:466px;color:#000;letter-spacing:0.191px">12 586</div>
<div class="t" style="left:595px;top:466px;color:#000;letter-spacing:0.074px">22.02.2004</div>
<svg class="a" style="left:238px;top:480px" width="16" height="16"><use href="#ixpm"/></svg>
<div class="t" style="left:255px;top:483px;color:#000;letter-spacing:0.011px">tile.black.xpm</div>
<div class="t" style="left:452px;top:483px;color:#000;letter-spacing:-0.023px">ACDSee ...</div>
<div class="t" style="right:114.5px;top:483px;color:#000;letter-spacing:0.191px">12 163</div>
<div class="t" style="left:595px;top:483px;color:#000;letter-spacing:0.074px">22.02.2004</div>
<svg class="a" style="left:238px;top:497px" width="16" height="16"><use href="#ixpm"/></svg>
<div class="t" style="left:255px;top:500px;color:#000;letter-spacing:0.059px">tile.snow.xpm</div>
<div class="t" style="left:452px;top:500px;color:#000;letter-spacing:-0.023px">ACDSee ...</div>
<div class="t" style="right:114.5px;top:500px;color:#000;letter-spacing:0.329px">11 641</div>
<div class="t" style="left:595px;top:500px;color:#000;letter-spacing:0.074px">22.02.2004</div>
<svg class="a" style="left:238px;top:514px" width="16" height="16"><use href="#ixpm"/></svg>
<div class="t" style="left:255px;top:517px;color:#000;letter-spacing:0.085px">tile2.xpm</div>
<div class="t" style="left:452px;top:517px;color:#000;letter-spacing:-0.023px">ACDSee ...</div>
<div class="t" style="right:114.5px;top:517px;color:#000;letter-spacing:0.329px">11 363</div>
<div class="t" style="left:595px;top:517px;color:#000;letter-spacing:0.074px">22.02.2004</div>
<svg class="a" style="left:238px;top:531px" width="16" height="16"><use href="#ipng"/></svg>
<div class="t" style="left:255px;top:534px;color:#000;letter-spacing:-0.036px">gnome-gegl2-2.png</div>
<div class="t" style="left:452px;top:534px;color:#000;letter-spacing:-0.297px">PNG Image</div>
<div class="t" style="right:114.5px;top:534px;color:#000;letter-spacing:0.191px">10 394</div>
<div class="t" style="left:595px;top:534px;color:#000;letter-spacing:0.074px">22.02.2004</div>
<svg class="a" style="left:238px;top:548px" width="16" height="16"><use href="#ixpm"/></svg>
<div class="t" style="left:255px;top:551px;color:#000;letter-spacing:0.096px">xine.xpm</div>
<div class="t" style="left:452px;top:551px;color:#000;letter-spacing:-0.023px">ACDSee ...</div>
<div class="t" style="right:114.5px;top:551px;color:#000;letter-spacing:0.254px">9 060</div>
<div class="t" style="left:595px;top:551px;color:#000;letter-spacing:0.074px">22.02.2004</div>
<svg class="a" style="left:238px;top:565px" width="16" height="16"><use href="#ixpm"/></svg>
<div class="t" style="left:255px;top:568px;color:#000;letter-spacing:-0.125px">Fish5.dir.xpm</div>
<div class="t" style="left:452px;top:568px;color:#000;letter-spacing:-0.023px">ACDSee ...</div>
<div class="t" style="right:114.5px;top:568px;color:#000;letter-spacing:0.254px">8 981</div>
<div class="t" style="left:595px;top:568px;color:#000;letter-spacing:0.074px">22.02.2004</div>
<svg class="a" style="left:238px;top:582px" width="16" height="16"><use href="#ixpm"/></svg>
<div class="t" style="left:255px;top:585px;color:#000;letter-spacing:-0.015px">RIP.5.xpm</div>
<div class="t" style="left:452px;top:585px;color:#000;letter-spacing:-0.023px">ACDSee ...</div>
<div class="t" style="right:114.5px;top:585px;color:#000;letter-spacing:0.254px">8 916</div>
<div class="t" style="left:595px;top:585px;color:#000;letter-spacing:0.074px">22.02.2004</div>
<svg class="a" style="left:238px;top:599px" width="16" height="1" viewBox="0 0 16 1"><use href="#ixpm" width="16" height="16"/></svg>
<!-- scrollbar -->
<div class="a" style="left:675px;top:120px;width:17px;height:480px;background:linear-gradient(to right,#eeede5,#f7f7f1 50%,#fdfdfa)"></div>
<div class="a" style="left:676px;top:120px;width:15px;height:16px;border-radius:3px;border:1px solid #fff;background:linear-gradient(135deg,#d2e0fd,#bccffa 60%,#b2c8f6);box-shadow:0 1px 0 #a4bcec"></div>
<svg class="a" style="left:675px;top:120px" width="17" height="17"><path d="M4.5 10l4-4 4 4" stroke="#4d6185" stroke-width="2" fill="none"/></svg>
<div class="a" style="left:676px;top:163px;width:15px;height:36px;border-radius:3px;border:1px solid #fff;background:linear-gradient(to right,#cad9fd,#c0d2fb 50%,#b6cbf8);box-shadow:0 1px 0 #a4bcec"></div>
<div class="a" style="left:680px;top:177px;width:7px;height:1px;background:#eef3fe;box-shadow:0 2px 0 #eef3fe,0 4px 0 #eef3fe,0 6px 0 #eef3fe,0 1px 0 #8caaf0,0 3px 0 #8caaf0,0 5px 0 #8caaf0,0 7px 0 #8caaf0"></div>
<div class="a" style="left:676px;top:583px;width:15px;height:17px;border-radius:3px;border:1px solid #fff;border-bottom:2px solid #fff;background:linear-gradient(135deg,#d2e0fd,#bccffa 60%,#b2c8f6);box-shadow:0 1px 0 #a4bcec"></div>
<svg class="a" style="left:675px;top:583px" width="17" height="17"><path d="M4.5 6.5l4 4 4-4" stroke="#4d6185" stroke-width="2" fill="none"/></svg>

<div class="a" style="left:4px;top:600px;width:688px;height:24px;background:linear-gradient(to bottom,#cdc9b6 0px,#dedbcb 1px,#efede3 3px,#ebe8da 40%,#e8e5d3 100%);border-bottom:1px solid #fbf9ee"></div>
<div class="t" style="left:7px;top:607px;letter-spacing:-0.081px">Linux native Volume 1\gdm-screen.png 24,84 kb</div>
<div class="a" style="left:668px;top:604px;width:1px;height:18px;background:#cac7b8"></div>
<div class="a" style="left:669px;top:604px;width:1px;height:18px;background:#fff"></div>
<svg class="a" style="left:678px;top:610px" width="14" height="14" shape-rendering="crispEdges"><rect x="11" y="3" width="2" height="2" fill="#fff"/><rect x="7" y="7" width="2" height="2" fill="#fff"/><rect x="11" y="7" width="2" height="2" fill="#fff"/><rect x="3" y="11" width="2" height="2" fill="#fff"/><rect x="7" y="11" width="2" height="2" fill="#fff"/><rect x="11" y="11" width="2" height="2" fill="#fff"/><rect x="10" y="2" width="2" height="2" fill="#aca899"/><rect x="6" y="6" width="2" height="2" fill="#aca899"/><rect x="10" y="6" width="2" height="2" fill="#aca899"/><rect x="2" y="10" width="2" height="2" fill="#aca899"/><rect x="6" y="10" width="2" height="2" fill="#aca899"/><rect x="10" y="10" width="2" height="2" fill="#aca899"/></svg>
</body></html>
